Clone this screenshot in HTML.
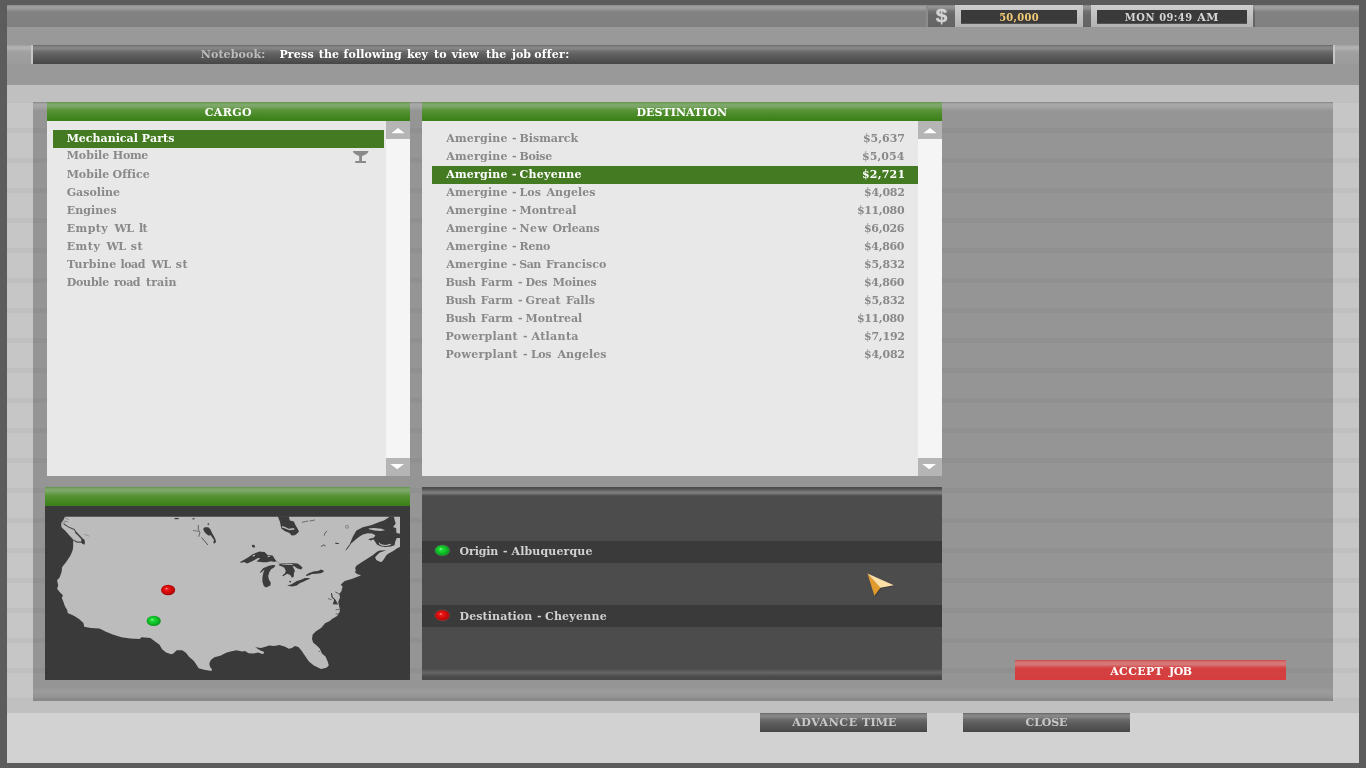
<!DOCTYPE html>
<html lang="en">
<head>
<meta charset="utf-8">
<title>Job Offer</title>
<style>
html,body{margin:0;padding:0;}
body{width:1366px;height:768px;overflow:hidden;background:#5c5c5c;position:relative;
 font-family:"DejaVu Serif","Liberation Serif",serif;font-weight:bold;font-size:11px;line-height:18px;color:#8c8c8c;}
div,span{position:absolute;box-sizing:border-box;white-space:nowrap;}
#frame{left:7px;top:5px;width:1352px;height:758px;background:#c6c6c6;overflow:hidden;will-change:transform;}
/* horizontal bands (coordinates relative to #frame: x-7, y-5) */
#b1{left:0;top:0;width:1352px;height:22px;background:linear-gradient(#8c8c8c 0,#a0a0a0 2px,#a0a0a0 3px,#828282 7px,#808080 22px);}
#b2{left:0;top:22px;width:1352px;height:58px;background:#999;}
#b3{left:0;top:80px;width:1352px;height:17px;background:#c0c0c0;}
#b4{left:0;top:696px;width:1352px;height:12px;background:#c0c0c0;}
#b5{left:0;top:708px;width:1352px;height:50px;background:#d2d2d2;}
#main{left:26px;top:97px;width:1300px;height:599px;background:linear-gradient(#8a8a8a 0,#a8a8a8 2px,#a8a8a8 4px,#959595 9px,#959595 585px,#9c9c9c 590px,#8c8c8c 599px);}
#stripes{left:0;top:97px;width:1352px;height:599px;background:repeating-linear-gradient(rgba(0,0,0,0) 0,rgba(0,0,0,0) 24.6px,rgba(0,0,0,.037) 25.4px,rgba(0,0,0,.037) 30px);background-position:0 1px;}
/* notebook bar */
#nbl{left:0;top:40px;width:24px;height:19px;background:linear-gradient(#a0a0a0 0,#b2b2b2 2px,#b2b2b2 3px,#a0a0a0 7px,#9c9c9c 19px);}
#nbr{left:1328px;top:40px;width:24px;height:19px;background:linear-gradient(#a0a0a0 0,#b2b2b2 2px,#b2b2b2 3px,#a0a0a0 7px,#9c9c9c 19px);}
#nb{left:24px;top:40px;width:1304px;height:19px;border-left:2px solid #c6c6c6;border-right:2px solid #c6c6c6;background:linear-gradient(#666 0,#808080 1.5px,#878787 3px,#838383 4px,#6c6c6c 6.5px,#5e5e5e 10px,#4c4c4c 17px,#464646 19px);}
/* top-right status */
.sep{top:0;height:22px;background:linear-gradient(#808080 0,#949494 1.5px,#909090 3px,#707070 6.5px,#686868 10px,#646464 22px);}
.box{top:0;height:22px;background:linear-gradient(#cecece 0,#c8c8c8 5px,#bcbcbc 14px,#b2b2b2 22px);}
.box i{position:absolute;left:6px;right:6px;top:5px;height:14px;background:linear-gradient(#3a3a3a 0,#3a3a3a 13px,#6a6a6a 14px);}
/* green headers */
.gh{height:19px;line-height:19px;text-align:center;color:#fff;background:linear-gradient(#5f9345 0,#7ea86b 2px,#7ea86b 4px,#5a9539 8px,#4c8c2a 12px,#3a7f17 19px);}
.list{background:#e8e8e8;}
.sb{background:#f5f5f5;width:24px;}
.sbb{left:0;width:24px;height:18px;background:#b5b5b5;}
.sel{background:#437a22;}
#map{left:38px;top:501px;width:365px;height:174px;background:#3a3a3a;}
#det{left:415px;top:482px;width:520px;height:193px;background:linear-gradient(#494949 0,#4c4c4c 1px,#585858 2.5px,#6e6e6e 4px,#7e7e7e 5.5px,#707070 7px,#525252 8.5px,#4c4c4c 9.5px,#4c4c4c 182px,#5c5c5c 184px,#666 185.8px,#545454 188px,#4b4b4b 189.6px,#484848 193px);}
.drow{left:0;width:520px;height:22px;background:#3a3a3a;}
.btn{height:19px;line-height:19px;text-align:center;color:#c8c8c8;background:linear-gradient(#646464 0,#808080 1.5px,#888 3px,#848484 4px,#6c6c6c 6.5px,#5e5e5e 10px,#4c4c4c 17px,#464646 19px);}
#acc{left:1008px;top:655px;width:271px;height:20px;line-height:20px;text-align:center;color:#fff;background:linear-gradient(#cb4747 0,#d36a6a 1.5px,#d67878 3px,#d67676 4.6px,#d55c5c 6.2px,#d54545 7.8px,#d44040 9px,#d43f3f 17px,#dc3a3a 20px);}
#dol{left:0;top:-1px;width:27px;height:24px;text-align:center;font:bold 19px/24px "Liberation Sans",sans-serif;color:#d4d4d4;-webkit-text-stroke:.35px #d4d4d4;transform:scaleX(1.1);}
.t{left:0;top:0;width:0;height:0;}
.t span{height:18px;line-height:18px;}
#icons{position:absolute;left:0;top:0;}
.t span.c{font-family:"DejaVu Serif Condensed","DejaVu Serif",serif;}
</style>
</head>
<body>
<div id="frame">
 <div id="b1"></div><div id="b2"></div><div id="b3"></div><div id="b4"></div><div id="b5"></div>
 <div id="main"></div>
 <div id="stripes"></div>
 <div id="nbl"></div><div id="nbr"></div>
 <div id="nb"></div>

 <div class="sep" style="left:919px;width:2px;background:#8c8c8c"></div>
 <div class="sep" style="left:921px;width:27px;"><span id="dol">$</span></div>
 <div class="box" style="left:948px;width:128px;"><i style="right:6.5px"></i></div>
 <div class="sep" style="left:1076px;width:8px;"></div>
 <div class="box" style="left:1084px;width:162px;"><i></i></div>
 <div class="sep" style="left:1246px;width:2px;"></div>

 <div class="gh" style="left:40px;top:97px;width:363px;"></div>
 <div class="list" style="left:40px;top:116px;width:339px;height:355px;">
  <div class="sel" style="left:6px;top:9px;width:331px;height:18px;"></div>
 </div>
 <div class="sb" style="left:379px;top:116px;height:355px;"><div class="sbb" style="top:0"></div><div class="sbb" style="top:337px"></div></div>

 <div class="gh" style="left:415px;top:97px;width:520px;"></div>
 <div class="list" style="left:415px;top:116px;width:496px;height:355px;">
  <div class="sel" style="left:10px;top:45px;width:486px;height:18px;"></div>
 </div>
 <div class="sb" style="left:911px;top:116px;height:355px;"><div class="sbb" style="top:0"></div><div class="sbb" style="top:337px"></div></div>

 <div class="gh" style="left:38px;top:482px;width:365px;"></div>
 <div id="map"><svg width="365" height="174" viewBox="45 506 365 174" style="position:absolute;left:0;top:0">
<path fill="#bcbcbc" d="M64.8 516.8 L400 516.8 L400 547 L399.8 547 L396.8 548.5 L393.3 551.1 L388.6 553.5 L386.3 555.2 L384.5 558.2 L382.2 561.4 L380.4 562 L376.3 559.9 L375.1 557.3 L376.9 555.2 L379.8 552.6 L382.8 551.4 L386.3 550.3 L379.8 550.6 L376.9 551.7 L373.4 554.7 L369.9 557 L365.2 559.9 L360.5 562.9 L356.4 565.8 L355.2 568.1 L355.8 570.5 L354.9 572.2 L357.5 574.3 L361.1 575.2 L358.1 576.6 L352.3 578.7 L344.7 581 L342.2 583.3 L340.7 584.8 L342.6 586.6 L341.5 591 L339.3 594 L340 597.6 L338.2 602 L339.3 607.1 L340 610.1 L339.3 612.6 L337.1 615.9 L332 618.9 L329.8 621 L325 623.2 L323.7 625 L321.1 627.9 L316 631.2 L312.7 634.5 L312 638.9 L313.1 642.6 L316.7 645.5 L319.7 648.4 L321.9 653.6 L325.5 656.5 L327.7 661.6 L328.8 665.6 L326.3 667.8 L321.1 668.9 L313.8 665.6 L308.7 661.2 L305 655.7 L301.4 650.6 L298.4 647 L294.8 645.9 L291.9 648.1 L288.9 648.8 L284.5 646.6 L279.4 645.1 L274.3 645.9 L269.2 645.5 L266.2 646.6 L261.1 648.1 L255.2 647.3 L260.4 650.5 L263.7 651.7 L264.2 653.2 L262.2 654.1 L258.2 652.5 L253.8 653.6 L248.7 653.2 L245 651 L242.2 651.4 L236.4 650.3 L230.5 651.4 L226.1 652.8 L220.3 655.7 L214.4 657.2 L210.8 660.1 L209.3 663.8 L210 666.7 L211.9 669.3 L211.5 671 L204.2 669.7 L198.7 668.2 L196.9 665.6 L193.9 660.9 L188.8 656.5 L185.9 652.8 L182.2 650.3 L176.7 650.3 L173.4 653.6 L171.2 654.3 L166.1 652.5 L162.1 649.2 L159.5 644.8 L154.4 641.1 L150 637.8 L150.8 638 L141.3 637.3 L139.8 639.1 L130.3 638.4 L121.5 637.3 L112.7 634.4 L105.4 631.4 L99.5 628.5 L90.7 628.1 L84.2 626.7 L83.4 623 L79 619 L73.9 615.7 L67.7 613.1 L67.3 610.3 L64.8 605.9 L63.3 601.5 L61.8 597.9 L62.9 595.3 L59.6 592 L57.1 588.7 L58.2 585.4 L57.1 580.3 L59.6 577.4 L61.5 572.2 L62.2 567.1 L66.2 562 L70.3 555.8 L72.5 550.7 L73.2 547 L73.2 541.9 L72.8 538.9 L69.2 535.3 L65.5 530.9 L61.5 527.2 L61.1 523.2 L63.7 519.5 L64.8 517Z"/>
<g fill="#3b3b3b">
<path d="M346.1 549.9 L349.3 545.2 L352.9 536.4 L356.4 530.5 L362.8 527.3 L371 525.2 L378.7 522.3 L383.9 520.6 L388.6 517.6 L389.2 516.4 L393.9 516.4 L394.5 519.4 L395.7 523.5 L393 527 L396.2 528.2 L396.2 530.5 L396.5 532.9 L400.3 533.7 L400.3 538.1 L396.8 538.1 L395.4 541.1 L394.5 545.2 L391 546.6 L385.1 546.9 L380.4 546.3 L376.9 544.6 L375.1 541.7 L373.4 539.3 L371 540.5 L368.1 539.3 L374 537.5 L375.4 535.2 L372.2 533.4 L367.5 533.2 L362.8 534.6 L358.1 537.5 L354.6 540.5 L351.1 543.4 L349.3 546.3 L347 549.3Z"/>
<path d="M277.8 516.2 L288.8 516.2 L289.9 520.6 L293.9 521.4 L295.4 525 L297.6 528.7 L299 531.6 L296.9 533.8 L294.7 535.3 L291.7 535.6 L289.5 533.1 L285.1 531.3 L281.5 528.7 L280.7 525.8 L280 522.1 L278.9 519.2Z"/>
<path d="M239.7 562.3 L244.1 559.8 L248.4 557.2 L252.5 554.3 L255 553.2 L259.4 551.6 L264.6 552.1 L267.5 555 L272.6 555.4 L274.8 559 L276.3 560.9 L274.8 562 L271.1 561.2 L266.7 562.3 L262.4 562.3 L256.5 561.6 L260.2 558.3 L258 557.9 L253.6 560.5 L250.6 562 L247 563.6 L244.1 562 L241.5 562.7Z"/>
<path d="M260.2 572.6 L263.1 568.2 L265.3 567.5 L268.2 566 L272.6 565.1 L275.5 565.3 L274.1 567.5 L271.1 569.3 L269.3 572.2 L268.2 575.9 L268.9 579.5 L270.8 582.8 L270.4 585.4 L266 587.6 L263.8 586.1 L262.4 581.7 L262.4 577.3 L263.5 572.2 L264.6 569.3 L261.6 572.2Z"/>
<path d="M278.5 564.9 L281.4 563.3 L287.2 563.1 L293.1 563.3 L297.5 563.4 L300.4 565.6 L302.6 567.8 L301.2 569.6 L297.5 568.6 L294.6 566.4 L292.4 565.6 L293.8 568.6 L294.9 570.7 L293.8 573.7 L293.8 576.6 L292 577.7 L290.2 575.1 L287.2 573.7 L284.3 575.5 L282.9 575.1 L285 573.3 L285.8 570.7 L284.3 567.8 L282.1 566.4 L279.2 565.6Z"/>
<path d="M305.9 575.1 L309.2 572.9 L313.6 571.5 L318.7 570.7 L320.9 569.4 L323.5 570.4 L323.8 571.8 L320.9 573.3 L316.5 573.8 L312.1 574 L308.5 575.5 L306.3 575.9Z"/>
<path d="M287.2 585.4 L291.6 584.3 L296.8 581 L300.4 579.9 L304.8 578.1 L309.2 577.9 L309.9 578.7 L306.3 580.3 L303.3 581.7 L299.7 583.2 L296.8 585.4 L292.4 586.6 L289.4 586.1Z"/>
<path d="M203.2 528.7 L204.7 527.2 L208.3 527.2 L210.5 529.4 L212 533.1 L214.2 536.7 L215.6 539.7 L216 541.9 L214.2 543.7 L213.1 542.2 L214.2 540.4 L212.3 537.5 L210.5 535.3 L208.3 535.6 L205.4 533.1 L203.9 530.9Z"/>
<path d="M338.2 604.6 L332.7 604.2 L334.2 599.8 L331.6 597.6 L330.9 593.2 L332 592.9 L332.7 596.9 L335.6 599.8 L337.1 602.7Z"/>
<path d="M251.7 545.1 L253.9 544.8 L255.2 546.2 L254.3 547.7 L252.5 547.3Z"/>
<path d="M174.6 517.9 L178.7 517.9 L178.7 519.2 L174.6 519.2Z"/>
<path d="M192.2 518.4 L194.8 518.1 L194.4 519.3 L192.6 519.5Z"/>
<path d="M207.6 523.6 L209.2 523.2 L209 524.7 L207.6 525Z"/>
<path d="M81.6 539.3 L84.2 538.9 L84.9 542.6 L84.2 544.8 L82.3 543.7 L81.2 541.9Z"/>
</g>
<g fill="#bcbcbc">
<path d="M368.1 528.5 L374 527.9 L381.6 528.8 L385.1 530.2 L380.4 531.1 L374.5 530.5 L369.9 529.6Z"/>
<path d="M379.2 542.5 L381 544.3 L385.7 544.9 L390.4 543.7 L391 544.9 L386.3 546 L381.6 545.8 L378.9 544Z"/>
<path d="M282.2 526.1 L285.1 526.9 L288.8 528.7 L293.9 528 L294.7 529.4 L289.5 530.2 L284.4 528.3 L281.8 527.6Z"/>
<path d="M281.4 563.8 L287.2 563.6 L292.4 564 L292.7 564.9 L287.2 564.7 L281.8 564.5Z"/>
<path d="M252.5 555.4 L254.7 554.6 L255 555.7 L253 556.7Z"/>
<path d="M267.5 556 L270 555.7 L270 556.8 L267.6 557Z"/>
</g>
<g fill="none" stroke="#3b3b3b" stroke-linecap="round" stroke-linejoin="round">
<path d="M64.2 524.2 L68.4 526.9 L74.3 529.4 L76.1 532.7" stroke-width="1.1" stroke-opacity="0.85"/>
<path d="M76.1 532.7 L79.4 536 L82 538.9 L83.4 541.9" stroke-width="1.7" stroke-opacity="0.9"/>
<path d="M83.8 543 L81.2 542.1 L77.2 542.2 L73.7 540.3" stroke-width="1.3" stroke-opacity="0.85"/>
<path d="M84.5 534.2 L88.9 536" stroke-width="0.7" stroke-opacity="0.45"/>
<path d="M62.2 523.2 L64.8 522.7" stroke-width="0.8" stroke-opacity="0.5"/>
<path d="M65.5 518.1 L68.4 519.5" stroke-width="0.8" stroke-opacity="0.5"/>
<path d="M64 521 L67.7 521.7" stroke-width="0.8" stroke-opacity="0.5"/>
<path d="M198.4 525.4 L198.2 529.1 L199.9 532.7 L198.8 536.4" stroke-width="1.0" stroke-opacity="0.7"/>
<path d="M193.3 530.5 L198.1 531.3" stroke-width="0.9" stroke-opacity="0.6"/>
<path d="M201.7 537.8 L204.7 541.1 L207.6 544.7" stroke-width="1.0" stroke-opacity="0.8"/>
<path d="M302.3 522.3 L307.8 521" stroke-width="0.9" stroke-opacity="0.7"/>
<path d="M310 520.9 L314.4 520.1" stroke-width="0.9" stroke-opacity="0.7"/>
<path d="M324.3 535.3 L325 533.1 L326.9 531.3" stroke-width="0.9" stroke-opacity="0.8"/>
<path d="M321.4 546.3 L323.6 544.8 L325.4 545.5" stroke-width="0.8" stroke-opacity="0.6"/>
<path d="M335.7 543.2 L338.6 543.6" stroke-width="1.0" stroke-opacity="0.8"/>
<path d="M335.9 543.3 L338.2 543.5" stroke-width="1.0" stroke-opacity="0.8"/>
<path d="M346.1 549.9 L349.3 545.2" stroke-width="0.9" stroke-opacity="0.9"/>
<path d="M260.2 572.6 L263.1 568.9 L265.3 567.5" stroke-width="0.8" stroke-opacity="0.7"/>
<path d="M321.3 546.2 L323.5 545.1 L324.9 546.2" stroke-width="0.8" stroke-opacity="0.6"/>
<path d="M335.6 592.1 L339.3 594" stroke-width="0.9" stroke-opacity="0.8"/>
<path d="M328.3 598.7 L331.2 599.5" stroke-width="0.9" stroke-opacity="0.7"/>
<path d="M336 609.7 L339.3 609.5" stroke-width="0.9" stroke-opacity="0.7"/>
<path d="M336 613.7 L339.3 614.1" stroke-width="0.9" stroke-opacity="0.7"/>
<path d="M276.3 561.2 L279.9 563.8" stroke-width="0.7" stroke-opacity="0.5"/>
</g>
<circle cx="347" cy="526.8" r="1.5" fill="none" stroke="#3b3b3b" stroke-width=".6" stroke-opacity=".7"/>
<circle cx="290.2" cy="581.6" r=".9" fill="#3b3b3b"/>
<circle cx="283.3" cy="575.5" r=".8" fill="#3b3b3b"/>
<circle cx="319.2" cy="651.4" r=".6" fill="#3b3b3b" fill-opacity=".7"/>
<defs>
<radialGradient id="gr" cx=".5" cy=".5" r=".62" fx=".38" fy=".36"><stop offset="0" stop-color="#ff9c9c"/><stop offset=".18" stop-color="#ee1a1a"/><stop offset=".5" stop-color="#d60a0a"/><stop offset=".8" stop-color="#a80808"/><stop offset="1" stop-color="#6a0606"/></radialGradient>
<radialGradient id="gg" cx=".5" cy=".5" r=".62" fx=".38" fy=".36"><stop offset="0" stop-color="#a0ffb0"/><stop offset=".18" stop-color="#22de3a"/><stop offset=".5" stop-color="#10c228"/><stop offset=".8" stop-color="#0c9a1e"/><stop offset="1" stop-color="#0a6216"/></radialGradient>
</defs>
<ellipse cx="168.1" cy="590" rx="7.1" ry="5.2" fill="url(#gr)"/>
<ellipse cx="153.7" cy="620.9" rx="7.1" ry="5.2" fill="url(#gg)"/>
</svg>
</div>

 <div id="det">
  <div class="drow" style="top:54px;"></div>
  <div class="drow" style="top:118px;"></div>
 </div>

 <div id="acc"></div>
 <div class="btn" style="left:753px;top:708px;width:167px;"></div>
 <div class="btn" style="left:956px;top:708px;width:167px;"></div>
 <div class="t" style="color:#bcbcbc"><span style="left:193.8px;top:41px;letter-spacing:0.11px">Notebook:</span></div>
 <div class="t" style="color:#fff"><span style="left:272.4px;top:41px;letter-spacing:0.20px">Press</span> <span style="left:311.8px;top:41px">the</span> <span style="left:336.6px;top:41px;letter-spacing:0.12px">following</span> <span style="left:400.0px;top:41px">key</span> <span style="left:427.1px;top:41px">to</span> <span style="left:444.8px;top:41px">view</span> <span style="left:479.1px;top:41px">the</span> <span style="left:505.0px;top:41px">job</span> <span style="left:527.2px;top:41px;letter-spacing:0.28px">offer:</span></div>
 <div class="t" style="color:#f3cb78"><span class="c" style="left:992.2px;top:4px;letter-spacing:0.30px">50,000</span></div>
 <div class="t" style="color:#d6d6d6"><span class="c" style="left:1117.8px;top:4px;letter-spacing:0.60px">MON</span> <span class="c" style="left:1152.3px;top:4px;letter-spacing:0.38px">09:49</span> <span style="left:1190.3px;top:4px;letter-spacing:0.30px">AM</span></div>
 <div class="t" style="color:#fff"><span style="left:197.7px;top:99px;letter-spacing:0.35px">CARGO</span></div>
 <div class="t" style="color:#fff"><span style="left:629.5px;top:99px;letter-spacing:0.05px">DESTINATION</span></div>
 <div class="t" style="color:#fff"><span style="left:59.7px;top:125px">Mechanical</span> <span style="left:134.8px;top:125px;letter-spacing:0.12px">Parts</span></div>
 <div class="t" style="color:#898989"><span style="left:59.7px;top:142px">Mobile</span> <span style="left:105.8px;top:142px;letter-spacing:-0.27px">Home</span></div>
 <div class="t" style="color:#898989"><span style="left:59.7px;top:161px">Mobile</span> <span style="left:105.5px;top:161px;letter-spacing:0.06px">Office</span></div>
 <div class="t" style="color:#898989"><span style="left:59.7px;top:179px">Gasoline</span></div>
 <div class="t" style="color:#898989"><span style="left:59.7px;top:197px;letter-spacing:0.08px">Engines</span></div>
 <div class="t" style="color:#898989"><span style="left:59.7px;top:215px;letter-spacing:0.47px">Empty</span> <span style="left:107.5px;top:215px;letter-spacing:-0.60px">WL</span> <span style="left:131.9px;top:215px;letter-spacing:-0.60px">lt</span></div>
 <div class="t" style="color:#898989"><span style="left:59.7px;top:233px;letter-spacing:0.53px">Emty</span> <span style="left:99.4px;top:233px;letter-spacing:-0.60px">WL</span> <span style="left:123.8px;top:233px;letter-spacing:0.60px">st</span></div>
 <div class="t" style="color:#898989"><span style="left:60.1px;top:251px;letter-spacing:0.22px">Turbine</span> <span style="left:113.6px;top:251px;letter-spacing:-0.53px">load</span> <span style="left:144.4px;top:251px;letter-spacing:-0.60px">WL</span> <span style="left:168.8px;top:251px;letter-spacing:0.60px">st</span></div>
 <div class="t" style="color:#898989"><span style="left:59.7px;top:269px;letter-spacing:-0.22px">Double</span> <span style="left:106.9px;top:269px;letter-spacing:-0.43px">road</span> <span style="left:139.0px;top:269px;letter-spacing:0.05px">train</span></div>
 <div class="t" style="color:#898989"><span style="left:439.2px;top:125px;letter-spacing:0.21px">Amergine</span> <span style="left:505.1px;top:125px">-</span> <span style="left:512.5px;top:125px">Bismarck</span> <span style="left:856.0px;top:125px;letter-spacing:-0.04px">$5,637</span></div>
 <div class="t" style="color:#898989"><span style="left:439.2px;top:143px;letter-spacing:0.21px">Amergine</span> <span style="left:505.1px;top:143px">-</span> <span style="left:512.5px;top:143px;letter-spacing:-0.32px">Boise</span> <span style="left:855.0px;top:143px;letter-spacing:0.06px">$5,054</span></div>
 <div class="t" style="color:#fff"><span style="left:439.2px;top:161px;letter-spacing:0.21px">Amergine</span> <span style="left:505.1px;top:161px">-</span> <span style="left:512.5px;top:161px;letter-spacing:0.27px">Cheyenne</span> <span style="left:855.0px;top:161px;letter-spacing:0.20px">$2,721</span></div>
 <div class="t" style="color:#898989"><span style="left:439.2px;top:179px;letter-spacing:0.21px">Amergine</span> <span style="left:505.1px;top:179px">-</span> <span style="left:512.5px;top:179px;letter-spacing:0.05px">Los</span> <span style="left:539.5px;top:179px;letter-spacing:0.07px">Angeles</span> <span style="left:857.0px;top:179px;letter-spacing:-0.24px">$4,082</span></div>
 <div class="t" style="color:#898989"><span style="left:439.2px;top:197px;letter-spacing:0.21px">Amergine</span> <span style="left:505.1px;top:197px">-</span> <span style="left:512.5px;top:197px;letter-spacing:0.04px">Montreal</span> <span style="left:849.9px;top:197px;letter-spacing:-0.35px">$11,080</span></div>
 <div class="t" style="color:#898989"><span style="left:439.2px;top:215px;letter-spacing:0.21px">Amergine</span> <span style="left:505.1px;top:215px">-</span> <span style="left:512.5px;top:215px;letter-spacing:0.55px">New</span> <span style="left:545.5px;top:215px;letter-spacing:-0.13px">Orleans</span> <span style="left:857.0px;top:215px;letter-spacing:-0.32px">$6,026</span></div>
 <div class="t" style="color:#898989"><span style="left:439.2px;top:233px;letter-spacing:0.21px">Amergine</span> <span style="left:505.1px;top:233px">-</span> <span style="left:512.5px;top:233px;letter-spacing:-0.23px">Reno</span> <span style="left:857.0px;top:233px;letter-spacing:-0.32px">$4,860</span></div>
 <div class="t" style="color:#898989"><span style="left:439.2px;top:251px;letter-spacing:0.21px">Amergine</span> <span style="left:505.1px;top:251px">-</span> <span style="left:512.3px;top:251px;letter-spacing:-0.60px">San</span> <span style="left:538.9px;top:251px;letter-spacing:0.11px">Francisco</span> <span style="left:857.0px;top:251px;letter-spacing:-0.22px">$5,832</span></div>
 <div class="t" style="color:#898989"><span style="left:438.6px;top:269px;letter-spacing:-0.40px">Bush</span> <span style="left:473.8px;top:269px;letter-spacing:0.10px">Farm</span> <span style="left:510.9px;top:269px">-</span> <span style="left:518.6px;top:269px;letter-spacing:-0.45px">Des</span> <span style="left:545.8px;top:269px;letter-spacing:-0.20px">Moines</span> <span style="left:857.0px;top:269px;letter-spacing:-0.32px">$4,860</span></div>
 <div class="t" style="color:#898989"><span style="left:438.6px;top:287px;letter-spacing:-0.40px">Bush</span> <span style="left:473.8px;top:287px;letter-spacing:0.10px">Farm</span> <span style="left:510.9px;top:287px">-</span> <span style="left:518.6px;top:287px;letter-spacing:0.15px">Great</span> <span style="left:559.0px;top:287px">Falls</span> <span style="left:857.0px;top:287px;letter-spacing:-0.22px">$5,832</span></div>
 <div class="t" style="color:#898989"><span style="left:438.6px;top:305px;letter-spacing:-0.40px">Bush</span> <span style="left:473.8px;top:305px;letter-spacing:0.10px">Farm</span> <span style="left:510.9px;top:305px">-</span> <span style="left:518.6px;top:305px">Montreal</span> <span style="left:850.0px;top:305px;letter-spacing:-0.38px">$11,080</span></div>
 <div class="t" style="color:#898989"><span style="left:438.6px;top:323px;letter-spacing:0.27px">Powerplant</span> <span style="left:515.9px;top:323px">-</span> <span style="left:524.5px;top:323px;letter-spacing:0.33px">Atlanta</span> <span style="left:857.0px;top:323px;letter-spacing:-0.22px">$7,192</span></div>
 <div class="t" style="color:#898989"><span style="left:438.6px;top:341px;letter-spacing:0.27px">Powerplant</span> <span style="left:515.9px;top:341px">-</span> <span style="left:523.9px;top:341px;letter-spacing:-0.30px">Los</span> <span style="left:550.5px;top:341px;letter-spacing:0.07px">Angeles</span> <span style="left:857.0px;top:341px;letter-spacing:-0.22px">$4,082</span></div>
 <div class="t" style="color:#d0d0d0"><span style="left:452.6px;top:538px;letter-spacing:-0.16px">Origin</span> <span style="left:495.9px;top:538px">-</span> <span style="left:504.5px;top:538px;letter-spacing:0.14px">Albuquerque</span></div>
 <div class="t" style="color:#d0d0d0"><span style="left:452.6px;top:603px;letter-spacing:0.10px">Destination</span> <span style="left:529.9px;top:603px">-</span> <span style="left:537.9px;top:603px;letter-spacing:0.23px">Cheyenne</span></div>
 <div class="t" style="color:#fff"><span style="left:1103.2px;top:658px;letter-spacing:0.34px">ACCEPT</span> <span style="left:1162.1px;top:658px;letter-spacing:-0.60px">JOB</span></div>
 <div class="t" style="color:#c8c8c8"><span style="left:785.2px;top:709px;letter-spacing:0.60px">ADVANCE</span> <span style="left:855.1px;top:709px;letter-spacing:0.13px">TIME</span></div>
 <div class="t" style="color:#c8c8c8"><span style="left:1018.5px;top:709px;letter-spacing:-0.10px">CLOSE</span></div>
<svg id="icons" width="1352" height="758" viewBox="7 5 1352 758">
 <defs>
  <radialGradient id="dr" cx=".5" cy=".5" r=".62" fx=".38" fy=".36"><stop offset="0" stop-color="#ff9c9c"/><stop offset=".18" stop-color="#ee1a1a"/><stop offset=".5" stop-color="#d60a0a"/><stop offset=".8" stop-color="#a80808"/><stop offset="1" stop-color="#6a0606"/></radialGradient>
  <radialGradient id="dg" cx=".5" cy=".5" r=".62" fx=".38" fy=".36"><stop offset="0" stop-color="#a0ffb0"/><stop offset=".18" stop-color="#22de3a"/><stop offset=".5" stop-color="#10c228"/><stop offset=".8" stop-color="#0c9a1e"/><stop offset="1" stop-color="#0a6216"/></radialGradient>
 </defs>
 <path fill="#fff" d="M398 128 L404.7 133.2 L391.3 133.2Z"/>
 <path fill="#fff" d="M390.3 464 L404 464 L397.2 469.2Z"/>
 <path fill="#fff" d="M930 128 L936.7 133.2 L923.3 133.2Z"/>
 <path fill="#fff" d="M922.3 464 L936 464 L929.2 469.2Z"/>
 <path fill="#8a8a8a" d="M352.8 151 L368.6 151 Q368.4 153.3 365.2 154.7 Q363 155.7 362 156 L362 161.1 L365.9 161.1 L365.9 163 L355.2 163 L355.2 161.1 L359.2 161.1 L359.2 156 Q358 155.7 356.2 154.7 Q353 153.3 352.8 151Z"/>
 <ellipse cx="442.3" cy="550.4" rx="7.4" ry="5.4" fill="url(#dg)" stroke="#888" stroke-opacity=".35" stroke-width=".8"/>
 <ellipse cx="442.3" cy="615.4" rx="7.4" ry="5.4" fill="url(#dr)" stroke="#888" stroke-opacity=".35" stroke-width=".8"/>
 <path fill="#222" fill-opacity=".3" d="M868.6 574.6 L894.6 586.2 L881.6 588.6 L875.4 596.8Z"/>
 <path fill="#e39a2c" d="M867.5 573.4 L880.6 587.4 L874.4 595.8Z"/>
 <path fill="#fbdfa6" d="M867.5 573.4 L893.8 585.3 L880.4 587.7Z"/>
</svg>

</div>
</body>
</html>
